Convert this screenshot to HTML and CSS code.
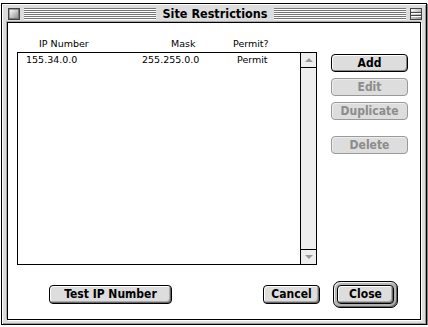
FILE: index.html
```html
<!DOCTYPE html>
<html lang="en">
<head>
    <meta charset="UTF-8">
    <title>Site Restrictions</title>
    <link rel="stylesheet" href="styles.css">
</head>
<body>
    <div class="window">
        <div class="titlebar">
            <span class="tb-box">
                <svg width="12" height="12" viewBox="0 0 12 12">
                    <defs>
                        <linearGradient id="boxfill" x1="0" y1="0" x2="1" y2="1">
                            <stop offset="0" stop-color="#ffffff"/>
                            <stop offset="1" stop-color="#8a8a8a"/>
                        </linearGradient>
                    </defs>
                    <rect x="0.5" y="0.5" width="11" height="11" fill="#555" stroke="#444"/>
                    <rect x="1.5" y="1.5" width="9" height="9" fill="url(#boxfill)" stroke="none"/>
                    <path d="M2 10.5 H10.5 V2" fill="none" stroke="#777"/>
                </svg>
            </span>
            <span class="stripes"></span>
            <span class="title">Site Restrictions</span>
            <span class="stripes"></span>
            <span class="tb-box">
                <svg width="12" height="12" viewBox="0 0 12 12">
                    <defs>
                        <linearGradient id="boxfill2" x1="0" y1="0" x2="1" y2="1">
                            <stop offset="0" stop-color="#ffffff"/>
                            <stop offset="1" stop-color="#8a8a8a"/>
                        </linearGradient>
                    </defs>
                    <rect x="0.5" y="0.5" width="11" height="11" fill="url(#boxfill2)" stroke="#444"/>
                    <path d="M1 4.5 H11 M1 7.5 H11" stroke="#444"/>
                    <path d="M1 5.5 H11 M1 8.5 H11" stroke="#fff"/>
                </svg>
            </span>
        </div>

        <div class="content">
            <div class="list-head">
                <span>IP Number</span>
                <span>Mask</span>
                <span>Permit?</span>
            </div>

            <div class="main">
                <div class="list">
                    <div class="rows">
                        <div class="row">
                            <span>155.34.0.0</span>
                            <span>255.255.0.0</span>
                            <span>Permit</span>
                        </div>
                    </div>
                    <div class="scrollbar">
                        <div class="arrow"><span class="tri up"></span></div>
                        <div class="track"></div>
                        <div class="arrow down-box"><span class="tri down"></span></div>
                    </div>
                </div>

                <div class="side-buttons">
                    <button class="btn side">Add</button>
                    <button class="btn side" disabled>Edit</button>
                    <button class="btn side" disabled>Duplicate</button>
                    <button class="btn side delete" disabled>Delete</button>
                </div>
            </div>

            <div class="footer-buttons">
                <button class="btn bottom test">Test IP Number</button>
                <button class="btn bottom cancel">Cancel</button>
                <span class="default-ring">
                    <button class="btn bottom close">Close</button>
                </span>
            </div>
        </div>
    </div>
</body>
</html>
```

FILE: styles.css
```css
:root {
    --frame-gray: #dddddd;
    --chrome-font: "DejaVu Sans Condensed", "DejaVu Sans", sans-serif;
    --small-font: "DejaVu Sans", "Liberation Sans", sans-serif;
}

* {
    box-sizing: border-box;
}

body {
    margin: 0;
    background: #ffffff;
}

.window {
    margin: 3px 0 0 1px;
    width: 426px;
    height: 322px;
    border: 1px solid #000;
    background: var(--frame-gray);
    box-shadow: inset 1px 1px 0 #fff, inset -1px -1px 0 #999, 1px 1px 0 #888, 2px 2px 0 #ccc;
    display: flex;
    flex-direction: column;
    padding: 0 5px 4px 5px;
}

/* title bar */

.titlebar {
    height: 18px;
    margin: 0 -5px;
    padding: 2px 4px 0 6px;
    display: flex;
    align-items: center;
    gap: 4px;
}

.tb-box {
    display: flex;
    width: 12px;
    height: 12px;
}

.stripes {
    flex: 1;
    height: 12px;
    background: repeating-linear-gradient(to bottom, #777 0 1px, #fff 1px 2px);
}

.title {
    margin: 0 3px;
    font: bold 12.5px var(--chrome-font);
    font-stretch: condensed;
    line-height: 14px;
    color: #000;
    white-space: nowrap;
}

/* content */

.content {
    flex: 1;
    background: #fff;
    border: 1px solid #000;
    box-shadow: -1px -1px 0 #aaa, 1px 1px 0 #fff;
    display: flex;
    flex-direction: column;
}

.list-head,
.row {
    font-family: var(--small-font);
    font-size: 9.5px;
    line-height: 12px;
    color: #000;
    display: grid;
}

.list-head {
    margin-top: 15px;
    padding-left: 31px;
    grid-template-columns: 132px 62px auto;
}

.main {
    display: flex;
    align-items: flex-start;
    gap: 14px;
    margin-top: 2px;
    padding-left: 9px;
}

.list {
    width: 300px;
    height: 213px;
    border: 1px solid #000;
    display: flex;
}

.rows {
    flex: 1;
    padding-top: 1px;
}

.row {
    padding-left: 8px;
    grid-template-columns: 116px 95px auto;
}

.scrollbar {
    width: 16px;
    border-left: 1px solid #000;
    background: #eeeeee;
    display: flex;
    flex-direction: column;
}

.arrow {
    height: 15px;
    border-bottom: 1px solid #000;
    display: flex;
    align-items: center;
    justify-content: center;
}

.arrow.down-box {
    border-bottom: none;
    border-top: 1px solid #000;
}

.track {
    flex: 1;
}

.tri {
    width: 0;
    height: 0;
    border-left: 4px solid transparent;
    border-right: 4px solid transparent;
}

.tri.up {
    border-bottom: 4px solid #999;
}

.tri.down {
    border-top: 4px solid #999;
}

/* buttons */

.btn {
    margin: 0;
    padding: 0;
    font: bold 12px var(--chrome-font);
    font-stretch: condensed;
    color: #000;
    background: var(--frame-gray);
    border: 1px solid #000;
    border-radius: 4px;
    box-shadow: inset 1px 1px 0 #fff, inset -1px -1px 0 #888;
    text-align: center;
}

.btn:disabled {
    color: #8c8c8c;
    border-color: #999;
    box-shadow: inset 1px 1px 0 #eee;
}

.side-buttons {
    display: flex;
    flex-direction: column;
    gap: 6px;
    margin-top: 2px;
}

.btn.side {
    width: 77px;
    height: 18px;
    line-height: 16px;
}

.btn.delete {
    margin-top: 10px;
}

.footer-buttons {
    display: flex;
    align-items: center;
    margin-top: 16px;
    padding: 0 22px 0 41px;
}

.btn.bottom {
    height: 19px;
    line-height: 17px;
    box-shadow: inset 1px 1px 0 #fff, inset -1px -1px 0 #666, inset -2px -2px 0 #aaa;
}

.btn.test {
    width: 123px;
}

.btn.cancel {
    width: 57px;
    margin-left: auto;
}

.default-ring {
    display: flex;
    margin-left: 13px;
    padding: 3px;
    border: 1px solid #000;
    border-radius: 7px;
    background: #b4b4b4;
    box-shadow: inset 1px 1px 0 #eee, inset -1px -1px 0 #666;
}

.btn.close {
    width: 57px;
}
```
